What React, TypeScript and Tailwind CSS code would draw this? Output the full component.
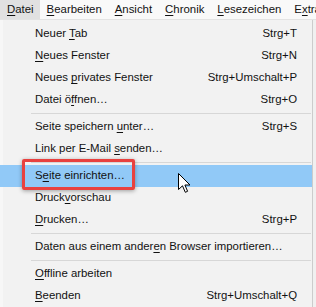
import React from "react"

type Item =
  | { sep: true }
  | { sep?: false; pre: string; key: string; post: string; shortcut?: string; active?: boolean }

const topMenu = [
  { pre: "", key: "D", post: "atei", open: true },
  { pre: "", key: "B", post: "earbeiten" },
  { pre: "", key: "A", post: "nsicht" },
  { pre: "", key: "C", post: "hronik" },
  { pre: "", key: "L", post: "esezeichen" },
  { pre: "E", key: "x", post: "tras" },
]

const items: Item[] = [
  { pre: "Neuer ", key: "T", post: "ab", shortcut: "Strg+T" },
  { pre: "", key: "N", post: "eues Fenster", shortcut: "Strg+N" },
  { pre: "Neues ", key: "p", post: "rivates Fenster", shortcut: "Strg+Umschalt+P" },
  { pre: "Datei ö", key: "f", post: "fnen…", shortcut: "Strg+O" },
  { sep: true },
  { pre: "Seite speichern ", key: "u", post: "nter…", shortcut: "Strg+S" },
  { pre: "Link per E-Mail ", key: "s", post: "enden…" },
  { sep: true },
  { pre: "S", key: "e", post: "ite einrichten…", active: true },
  { pre: "Druck", key: "v", post: "orschau" },
  { pre: "", key: "D", post: "rucken…", shortcut: "Strg+P" },
  { sep: true },
  { pre: "Daten aus einem ander", key: "e", post: "n Browser importieren…" },
  { sep: true },
  { pre: "", key: "O", post: "ffline arbeiten" },
  { pre: "", key: "B", post: "eenden", shortcut: "Strg+Umschalt+Q" },
]

function Label({ pre, k, post }: { pre: string; k: string; post: string }) {
  return (
    <span>
      {pre}
      <span className="underline underline-offset-[1.5px]">{k}</span>
      {post}
    </span>
  )
}

export default function App() {
  return (
    <div
      className="relative w-[316px] h-[307px] overflow-hidden bg-[#f0f0f0] text-[11.4px] text-[#111]"
      style={{ fontFamily: '"Liberation Sans", Arial, sans-serif' }}
    >
      <div className="flex h-[20px] bg-[#f9f9f9] border-b border-[#e3e3e3] whitespace-nowrap">
        {topMenu.map((m, i) => (
          <div
            key={i}
            className={`flex items-center pl-[7px] pr-[6px] h-[19px] shrink-0 ${m.open ? "bg-[#e1e1e1]" : ""}`}
          >
            <Label pre={m.pre} k={m.key} post={m.post} />
          </div>
        ))}
      </div>

      <div className="w-[313px] bg-[#f2f2f2] border-r border-[#cccccc] pt-[3px] border-l-[3px] border-l-[#f7f7f7]">
        {items.map((it, i) =>
          it.sep ? (
            <div key={i} className="h-[5px] flex items-center pl-[28px] pr-[1px]">
              <div className="h-px w-full bg-[#d7d7d7]" />
            </div>
          ) : (
            <div
              key={i}
              className={`h-[22px] flex items-center justify-between -ml-[3px] pl-[35px] pr-[15px] ${
                it.active ? "bg-[#91c9f7]" : ""
              }`}
            >
              <Label pre={it.pre} k={it.key} post={it.post} />
              {it.shortcut && <span>{it.shortcut}</span>}
            </div>
          )
        )}
      </div>

      <div className="absolute left-[22px] top-[159px] w-[113px] h-[31px] border-[3px] border-[#e8413f] rounded-[2px] shadow-[0_1px_4px_rgba(0,0,0,0.35)]" />

      <svg className="absolute left-[178px] top-[173px]" width="13" height="21" viewBox="0 0 13 21">
        <path
          d="M0.5 0.5 L0.5 16.5 L4.5 12.8 L7.3 19.3 L9.6 18.3 L6.9 12 L12 12 Z"
          fill="#ffffff"
          stroke="#000000"
          strokeWidth="1"
          strokeLinejoin="round"
        />
      </svg>
    </div>
  )
}
